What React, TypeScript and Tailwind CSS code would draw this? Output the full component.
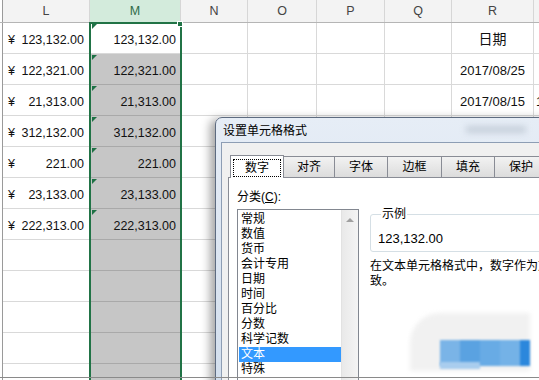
import React from 'react';

const cols = [
  { key: 'stub', label: '', w: 'w-[3px]' },
  { key: 'L', label: 'L', w: 'w-[87px]' },
  { key: 'M', label: 'M', w: 'w-[91px]' },
  { key: 'N', label: 'N', w: 'w-[67px]' },
  { key: 'O', label: 'O', w: 'w-[69px]' },
  { key: 'P', label: 'P', w: 'w-[68px]' },
  { key: 'Q', label: 'Q', w: 'w-[67px]' },
  { key: 'R', label: 'R', w: 'w-[82px]' },
  { key: 'S', label: '', w: 'w-[40px]' },
];

const values = ['123,132.00', '122,321.00', '21,313.00', '312,132.00', '221.00', '23,133.00', '222,313.00'];
const rCol = ['日期', '2017/08/25', '2017/08/15'];

const categories = ['常规', '数值', '货币', '会计专用', '日期', '时间', '百分比', '分数', '科学记数', '文本', '特殊'];
const tabs = [
  { label: '数字', w: 'w-[54px]' },
  { label: '对齐', w: 'w-[52px]' },
  { label: '字体', w: 'w-[54px]' },
  { label: '边框', w: 'w-[55px]' },
  { label: '填充', w: 'w-[54px]' },
  { label: '保护', w: 'w-[54px]' },
];

const Cell: React.FC<{ col: string; row: number }> = ({ col, row }) => {
  const val = values[row];
  if (col === 'stub') return null;
  if (col === 'L' && val) {
    return (
      <div className="flex w-full justify-between px-[5px]">
        <span>¥</span>
        <span>{val}</span>
      </div>
    );
  }
  if (col === 'M' && val) {
    return <div className="w-full text-right pr-[4px]">{val}</div>;
  }
  if (col === 'R' && rCol[row]) {
    return (
      <div className={`w-full text-center ${row === 0 ? 'text-[14px] pb-[1px]' : 'text-[13px]'}`}>{rCol[row]}</div>
    );
  }
  if (col === 'S' && row === 2) return <div className="pl-[2px] text-[13px]">1</div>;
  return null;
};

export default function App() {
  const rows = Array.from({ length: 12 }, (_, i) => i);
  return (
    <div className="relative w-[539px] h-[380px] overflow-hidden bg-white text-[#111] font-['Liberation_Sans','Noto_Sans_CJK_SC',sans-serif] text-[12.5px]">
      {/* header */}
      <div className="flex h-[23px] border-b border-[#b5b5b5] bg-[#f3f3f3] text-[#444]">
        {cols.map(c => (
          <div
            key={c.key}
            className={`${c.w} shrink-0 flex items-center justify-center border-r ${
              c.key === 'stub' ? 'border-[#9a9a9a] bg-white' : 'border-[#d6d6d6]'
            } ${c.key === 'M' ? 'bg-[#d3ebdc] text-[#2f6b48]' : ''}`}
          >
            {c.label}
          </div>
        ))}
      </div>

      {/* rows */}
      {rows.map(r => (
        <div key={r} className="flex h-[31px]">
          {cols.map(c => (
            <div
              key={c.key}
              className={`${c.w} shrink-0 relative flex items-end pb-[5px] leading-[16px] border-r ${
                c.key === 'stub'
                  ? 'border-[#9a9a9a]'
                  : c.key === 'M' && r > 0
                  ? 'bg-[#c6c6c6] border-b border-b-[#a9a9a9] border-r-[#d6d6d6]'
                  : 'border-b border-[#d9d9d9]'
              }`}
            >
              {c.key === 'M' && r < 7 && (
                <div className="absolute left-[2px] top-[1px] w-0 h-0 border-t-[5px] border-r-[5px] border-t-[#1e7145] border-r-transparent" />
              )}
              <Cell col={c.key} row={r} />
            </div>
          ))}
        </div>
      ))}

      {/* selection */}
      <div className="absolute left-[89px] top-[22px] w-[93px] h-[400px] border-2 border-[#217346]" />
      <div className="absolute left-[177px] top-[21px] w-[6px] h-[6px] bg-[#217346] border border-white" />

      {/* dialog */}
      <div className="absolute left-[215px] top-[117px] w-[340px] h-[270px] rounded-tl-[7px] border border-[#5d6b80] bg-gradient-to-b from-[#e6edf6] to-[#d2deed] pl-[5px] shadow-[-5px_2px_10px_rgba(0,0,0,0.35)] font-['Liberation_Sans','Noto_Sans_CJK_SC',sans-serif] text-[12px] text-black">
        <div className="relative h-[24px] pl-[2px] flex items-center leading-none pt-[1px]">
          设置单元格格式
          <div className="absolute left-[245px] top-[8px] w-[60px] h-[7px] bg-[#b9c3cf] blur-[3px] opacity-70" />
        </div>
        <div className="h-full border border-[#8d9db4] bg-[#f0f0f0] pl-[6px] pt-[11px]">
          <div className="flex items-end pl-[2px] h-[23px]">
            {tabs.map((t, i) =>
              i === 0 ? (
                <div
                  key={t.label}
                  className={`${t.w} shrink-0 h-[23px] -mb-[1px] z-10 bg-white border border-b-0 border-[#898c95] flex items-center justify-center px-[2px] pt-[1px]`}
                >
                  <div className="w-full h-[18px] border border-dotted border-black flex items-center justify-center leading-none">
                    {t.label}
                  </div>
                </div>
              ) : (
                <div
                  key={t.label}
                  className={`${t.w} shrink-0 h-[21px] -ml-[1px] border border-b-0 border-[#898c95] bg-gradient-to-b from-[#f2f2f2] to-[#dcdcdc] flex items-center justify-center leading-none`}
                >
                  {t.label}
                </div>
              )
            )}
          </div>
          <div className="h-full border border-[#898c95] bg-white pl-[8px] pt-[12px] flex gap-[11px]">
            <div className="w-[122px] shrink-0">
              <div className="leading-[15px] h-[15px]">
                分类(<span className="underline">C</span>):
              </div>
              <div className="mt-[4px] h-[200px] border border-[#828790] flex">
                <div className="flex-1 pt-[2px] leading-[15px]">
                  {categories.map(c => (
                    <div
                      key={c}
                      className={`h-[15px] ml-[1px] pl-[2px] whitespace-nowrap ${
                        c === '文本' ? 'bg-[#3399ff] text-white' : ''
                      }`}
                    >
                      {c}
                    </div>
                  ))}
                </div>
                <div className="w-[17px] shrink-0 bg-gradient-to-r from-[#e9e9e9] to-[#f4f4f4] border-l border-[#e2e2e2] flex justify-center pt-[8px]">
                  <div className="w-0 h-0 border-l-[4px] border-r-[4px] border-b-[4px] border-l-transparent border-r-transparent border-b-[#a0a0a0]" />
                </div>
              </div>
            </div>
            <div className="flex-1 pt-[17px] whitespace-nowrap">
              <fieldset className="w-[220px] h-[45px] border border-[#d5dfe5] rounded-[3px] pl-[7px]">
                <legend className="ml-[3px] px-[1px] leading-[14px] h-[14px]">示例</legend>
                <div className="text-[13px] leading-[16px] mt-[10px]">123,132.00</div>
              </fieldset>
              <div className="mt-[7px] leading-[15px]">
                <div className="h-[15px]">在文本单元格格式中，数字作为文本处理。单元格显示的内容与输入的内容完全一</div>
                <div className="h-[15px]">致。</div>
              </div>
            </div>
          </div>
        </div>
      </div>

      {/* blurred watermark */}
      <div className="absolute left-[410px] top-[313px] w-[120px] h-[58px] rounded-tl-[30px] bg-[#f1f1f1] blur-[2px]" />
      <div className="absolute left-[440px] top-[340px] flex h-[26px] blur-[1px]">
        <div className="w-[20px] bg-[#7ab4e7]" />
        <div className="w-[20px] bg-[#5aa2e1]" />
        <div className="w-[20px] bg-[#68abe5]" />
        <div className="w-[20px] bg-[#74b2e7]" />
        <div className="w-[10px] bg-[#2b87dc]" />
      </div>
      <div className="absolute left-[440px] top-[362px] w-[40px] h-[7px] bg-[#a9cdee] blur-[1px]" />

      {/* bottom frame line */}
      <div className="absolute left-0 right-0 top-[377px] h-[1px] bg-[#8a8a8a]" />
    </div>
  );
}
